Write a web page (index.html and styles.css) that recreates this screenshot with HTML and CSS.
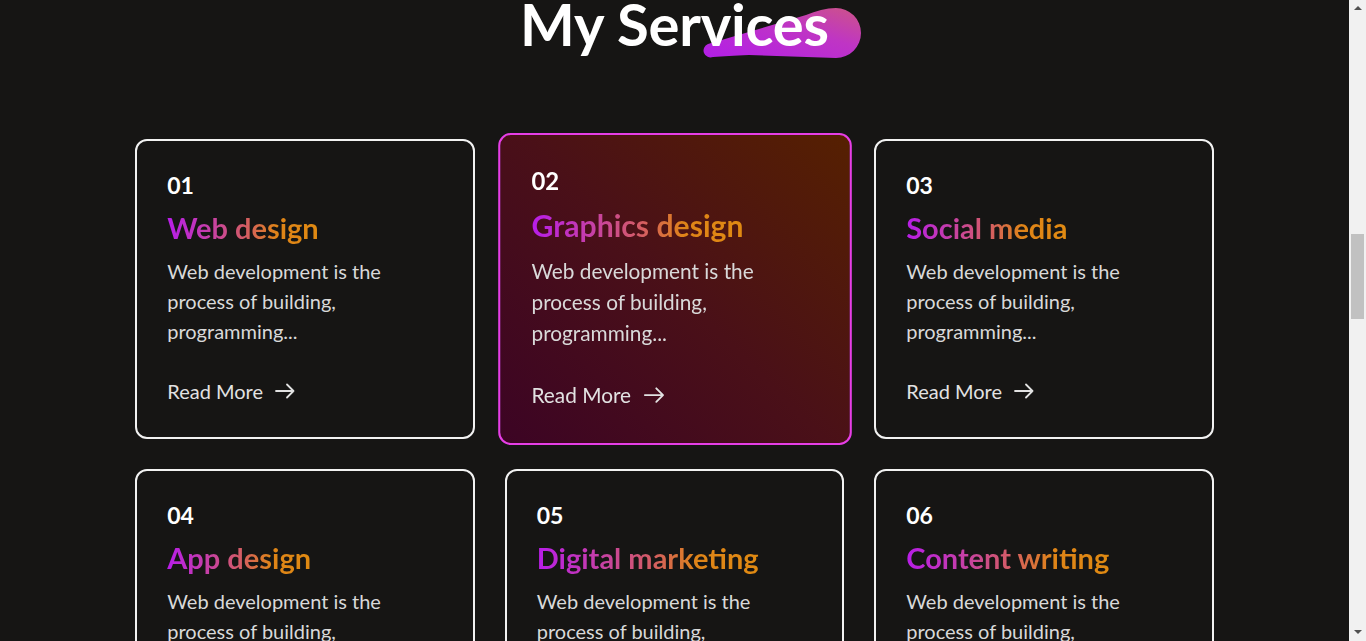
FILE: index.html
```html
<!DOCTYPE html>
<html lang="en">
<head>
<meta charset="utf-8">
<title>My Services</title>
<link rel="stylesheet" href="styles.css">
</head>
<body>
<main class="page">
  <section class="services">
    <header class="services-head">
      <h2 class="services-title">
        <svg class="title-blob" width="162" height="52" viewBox="0 0 162 52" aria-hidden="true">
          <defs>
            <linearGradient id="blobGrad" x1="0" y1="1" x2="1" y2="0">
              <stop offset="0" stop-color="#b21ee8"/>
              <stop offset="0.6" stop-color="#bf35c4"/>
              <stop offset="1" stop-color="#cd5487"/>
            </linearGradient>
          </defs>
          <path d="M7 37 L105 8 C115 4 125 1 135 1 A25 25 0 0 1 135 51 L48 48 C40 48 34 49 28 49 L12 50 A6.5 6.5 0 0 1 7 37 Z" fill="url(#blobGrad)"/>
        </svg>
        <span class="title-text">My Services</span>
      </h2>
    </header>

    <div class="cards">
      <article class="card">
        <span class="card-num">01</span>
        <h3 class="card-title">Web design</h3>
        <p class="card-desc">Web development is the process of building, programming...</p>
        <a class="card-link" href="#">Read More
          <svg class="arrow" width="20" height="16" viewBox="0 0 20 16" aria-hidden="true"><path d="M1 8 H18.5 M12 1.5 L18.5 8 L12 14.5" fill="none" stroke="currentColor" stroke-width="1.8" stroke-linecap="round" stroke-linejoin="round"/></svg>
        </a>
      </article>
      <article class="card card-active">
        <span class="card-num">02</span>
        <h3 class="card-title">Graphics design</h3>
        <p class="card-desc">Web development is the process of building, programming...</p>
        <a class="card-link" href="#">Read More
          <svg class="arrow" width="20" height="16" viewBox="0 0 20 16" aria-hidden="true"><path d="M1 8 H18.5 M12 1.5 L18.5 8 L12 14.5" fill="none" stroke="currentColor" stroke-width="1.8" stroke-linecap="round" stroke-linejoin="round"/></svg>
        </a>
      </article>
      <article class="card">
        <span class="card-num">03</span>
        <h3 class="card-title">Social media</h3>
        <p class="card-desc">Web development is the process of building, programming...</p>
        <a class="card-link" href="#">Read More
          <svg class="arrow" width="20" height="16" viewBox="0 0 20 16" aria-hidden="true"><path d="M1 8 H18.5 M12 1.5 L18.5 8 L12 14.5" fill="none" stroke="currentColor" stroke-width="1.8" stroke-linecap="round" stroke-linejoin="round"/></svg>
        </a>
      </article>
      <article class="card">
        <span class="card-num">04</span>
        <h3 class="card-title">App design</h3>
        <p class="card-desc">Web development is the process of building, programming...</p>
        <a class="card-link" href="#">Read More
          <svg class="arrow" width="20" height="16" viewBox="0 0 20 16" aria-hidden="true"><path d="M1 8 H18.5 M12 1.5 L18.5 8 L12 14.5" fill="none" stroke="currentColor" stroke-width="1.8" stroke-linecap="round" stroke-linejoin="round"/></svg>
        </a>
      </article>
      <article class="card">
        <span class="card-num">05</span>
        <h3 class="card-title">Digital marketing</h3>
        <p class="card-desc">Web development is the process of building, programming...</p>
        <a class="card-link" href="#">Read More
          <svg class="arrow" width="20" height="16" viewBox="0 0 20 16" aria-hidden="true"><path d="M1 8 H18.5 M12 1.5 L18.5 8 L12 14.5" fill="none" stroke="currentColor" stroke-width="1.8" stroke-linecap="round" stroke-linejoin="round"/></svg>
        </a>
      </article>
      <article class="card">
        <span class="card-num">06</span>
        <h3 class="card-title">Content writing</h3>
        <p class="card-desc">Web development is the process of building, programming...</p>
        <a class="card-link" href="#">Read More
          <svg class="arrow" width="20" height="16" viewBox="0 0 20 16" aria-hidden="true"><path d="M1 8 H18.5 M12 1.5 L18.5 8 L12 14.5" fill="none" stroke="currentColor" stroke-width="1.8" stroke-linecap="round" stroke-linejoin="round"/></svg>
        </a>
      </article>
    </div>
  </section>
</main>
<div class="scrollbar" aria-hidden="true">
  <span class="sb-arrow sb-up"></span>
  <div class="sb-track"><span class="sb-thumb"></span></div>
  <span class="sb-arrow sb-down"></span>
</div>
</body>
</html>
```

FILE: styles.css
```css
* { box-sizing: border-box; }

html, body {
  margin: 0;
  height: 641px;
  overflow: hidden;
}

body {
  display: flex;
  background: #161514;
  font-family: "Lato", "Noto Sans", sans-serif;
  color: #fff;
}

.page {
  flex: 1;
  min-width: 0;
}

.services {
  display: flex;
  flex-direction: column;
  align-items: center;
}

.services-head {
  margin-top: -11px;
  margin-bottom: 80px;
}

.services-title {
  position: relative;
  margin: 0;
  font-size: 58px;
  line-height: 1.2;
  font-weight: 700;
  letter-spacing: -0.2px;
  z-index: 0;
}

.title-text {
  position: relative;
  z-index: 1;
}

.title-blob {
  position: absolute;
  left: 181px;
  top: 18px;
  z-index: 0;
}

.cards {
  display: grid;
  grid-template-columns: repeat(3, 339.5px);
  gap: 30px;
}

.card {
  height: 300px;
  border: 2px solid #f2f2f2;
  border-radius: 12px;
  padding: 29px 30px 0;
  display: flex;
  flex-direction: column;
  align-items: flex-start;
  background: #161514;
}

.card-active {
  transform: scale(1.04);
  border-color: #e63ee6;
  background: linear-gradient(45deg, #3c0424 0%, #4a1018 50%, #562001 100%);
}

.card-num {
  font-size: 23px;
  line-height: 30px;
  font-weight: 700;
  color: #fff;
}

.card-title {
  margin: 8px 0 0;
  font-size: 29px;
  line-height: 40px;
  font-weight: 700;
  background: linear-gradient(90deg, #b81de9 0%, #c63fa8 28%, #d45d63 52%, #df8418 72%, #e08a12 100%);
  -webkit-background-clip: text;
  background-clip: text;
  color: transparent;
}

.card-desc {
  margin: 8px 0 0;
  width: 250px;
  font-size: 20px;
  line-height: 30px;
  color: #d9d9d9;
}

.card-link {
  margin-top: 30px;
  display: flex;
  align-items: center;
  gap: 12px;
  font-size: 20px;
  line-height: 30px;
  color: #e2e2e2;
  text-decoration: none;
}

.arrow { display: block; }

.scrollbar {
  width: 17px;
  flex: none;
  background: #f1f1f1;
  display: flex;
  flex-direction: column;
  align-items: center;
}

.sb-arrow {
  width: 0;
  height: 0;
  border-left: 4px solid transparent;
  border-right: 4px solid transparent;
}

.sb-up {
  margin-top: 6px;
  border-bottom: 4px solid #505050;
}

.sb-down {
  margin-bottom: 7px;
  border-top: 4px solid #505050;
}

.sb-track {
  flex: 1;
  align-self: stretch;
  padding: 224px 2px 0;
}

.sb-thumb {
  display: block;
  height: 85px;
  background: #c1c1c1;
}
```
